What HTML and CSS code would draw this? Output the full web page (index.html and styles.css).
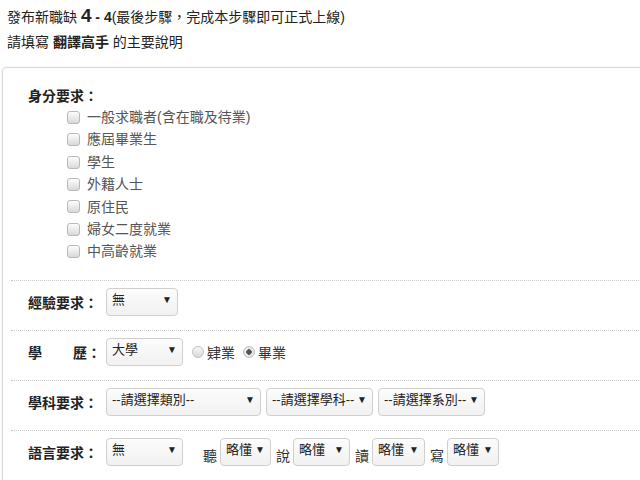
FILE: index.html
```html
<!DOCTYPE html>
<html lang="zh-Hant">
<head>
  <meta charset="UTF-8" />
  <meta name="viewport" content="width=device-width, initial-scale=1.0" />
  <title>發布新職缺</title>
  <link rel="stylesheet" href="styles.css">
</head>
<body>
  <header class="steps">
    <p>發布新職缺 <b class="big">4</b><b> - 4</b>(最後步驟，完成本步驟即可正式上線)</p>
    <p>請填寫 <b>翻譯高手</b> 的主要說明</p>
  </header>

  <form class="panel">
    <div class="identity">
      <h3>身分要求：</h3>
      <ul>
        <li><label><input type="checkbox"> 一般求職者(含在職及待業)</label></li>
        <li><label><input type="checkbox"> 應屆畢業生</label></li>
        <li><label><input type="checkbox"> 學生</label></li>
        <li><label><input type="checkbox"> 外籍人士</label></li>
        <li><label><input type="checkbox"> 原住民</label></li>
        <li><label><input type="checkbox"> 婦女二度就業</label></li>
        <li><label><input type="checkbox"> 中高齡就業</label></li>
      </ul>
    </div>

    <div class="row">
      <span class="label">經驗要求：</span>
      <span class="sel w72"><select><option>無</option></select></span>
    </div>

    <div class="row">
      <span class="label"><span class="spread">學</span>歷：</span>
      <span class="sel w77"><select><option>大學</option></select></span>
      <label class="radio"><input type="radio" name="grad">肄業</label>
      <label class="radio"><input type="radio" name="grad" checked>畢業</label>
    </div>

    <div class="row">
      <span class="label">學科要求：</span>
      <span class="sel w155"><select><option>--請選擇類別--</option></select></span>
      <span class="sel w107"><select><option>--請選擇學科--</option></select></span>
      <span class="sel w107"><select><option>--請選擇系別--</option></select></span>
    </div>

    <div class="row lang">
      <span class="label">語言要求：</span>
      <span class="sel w77"><select><option>無</option></select></span>
      <span class="skill first">聽</span>
      <span class="sel w51"><select><option>略懂</option></select></span>
      <span class="skill">說</span>
      <span class="sel w57"><select><option>略懂</option></select></span>
      <span class="skill">讀</span>
      <span class="sel w53"><select><option>略懂</option></select></span>
      <span class="skill">寫</span>
      <span class="sel w52"><select><option>略懂</option></select></span>
    </div>
  </form>
</body>
</html>
```

FILE: styles.css
```css
html, body {
  overflow: hidden;
}
body {
  font-family: "Liberation Sans", "Noto Sans CJK TC", sans-serif;
  font-size: 14px;
  color: #333;
  margin: 0;
  padding: 0;
  background: #fff;
}
.steps {
  padding: 3px 0 0 7px;
  color: #222;
}
.steps p {
  margin: 0;
  line-height: 25px;
}
.steps .big {
  font-size: 19px;
}
.panel {
  margin: 12px 0 0 2px;
  width: 720px;
  min-height: 440px;
  border: 1px solid #d8d8d8;
  border-radius: 4px;
  box-shadow: 0 0 2px rgba(0, 0, 0, 0.08);
  padding: 0 0 0 8px;
}
.identity {
  padding: 18px 0 17px 17px;
}
.identity h3 {
  margin: 0;
  font-size: 14px;
  line-height: 20px;
  color: #222;
}
.identity ul {
  list-style: none;
  margin: 0;
  padding: 0 0 0 39px;
}
.identity li {
  line-height: 22.4px;
  color: #555;
}
.identity label {
  display: flex;
  align-items: center;
  gap: 7px;
}
input[type="checkbox"] {
  appearance: none;
  margin: 0;
  width: 13px;
  height: 13px;
  border: 1px solid #b9b9b9;
  border-radius: 3px;
  background: linear-gradient(#fdfdfd, #d9d9d9);
}
.row {
  display: flex;
  align-items: center;
  border-top: 1px dotted #c8c8c8;
  padding: 7px 0 14px 17px;
}
.label {
  width: 78px;
  font-weight: bold;
  color: #222;
  flex: none;
}
.spread {
  margin-right: 31px;
}
.sel {
  position: relative;
  display: inline-block;
  height: 28px;
  margin-right: 5px;
}
.lang .sel {
  margin-right: 0;
}
.sel select {
  appearance: none;
  width: 100%;
  height: 28px;
  border: 1px solid #cfcfcf;
  border-radius: 4px;
  background: linear-gradient(#fcfcfc, #f1f1f1);
  font-family: inherit;
  font-size: 13px;
  color: #222;
  padding: 0 0 5px 5px;
}
.sel::after {
  content: "▼";
  position: absolute;
  right: 6px;
  top: 6px;
  font-size: 10px;
  color: #222;
  pointer-events: none;
}
.w72 { width: 72px; }
.w77 { width: 77px; }
.w155 { width: 155px; }
.w107 { width: 107px; }
.w51 { width: 51px; }
.w57 { width: 57px; }
.w53 { width: 53px; }
.w52 { width: 52px; }
.radio {
  display: flex;
  align-items: center;
  gap: 3px;
  margin-left: 4px;
  margin-right: 4px;
  color: #333;
}
input[type="radio"] {
  appearance: none;
  margin: 0;
  width: 12px;
  height: 12px;
  border: 1px solid #c2c2c2;
  border-radius: 50%;
  background: linear-gradient(#f8f8f8, #d8d8d8);
}
input[type="radio"]:checked {
  background: radial-gradient(circle, #555 0 2.5px, #eee 3px, #d4d4d4 100%);
}
.skill {
  margin: 0 3px 0 5px;
  padding-top: 6px;
  color: #333;
}
.skill.first {
  margin-left: 20px;
}
```
